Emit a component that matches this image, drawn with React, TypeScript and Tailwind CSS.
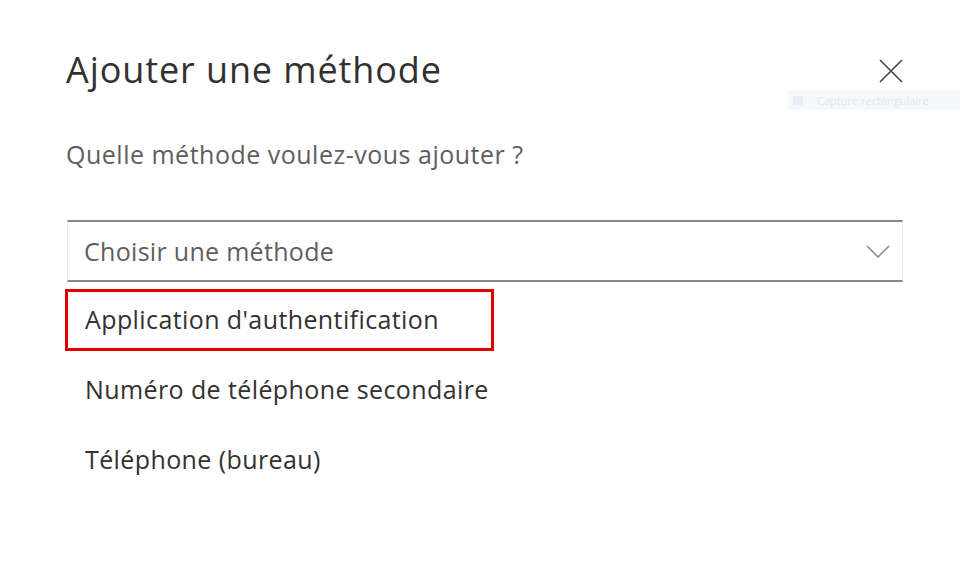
import React from "react";

const methods = [
  "Application d'authentification",
  "Numéro de téléphone secondaire",
  "Téléphone (bureau)",
];

export default function App() {
  const selected = 0;

  return (
    <div className="relative h-[583px] w-[963px] overflow-hidden bg-white font-['Open_Sans',sans-serif]">
      <div className="pl-[66px] pr-[60px] pt-[48px]">
        <div className="flex items-start justify-between">
          <h1 className="text-[36px] leading-[44px] tracking-[0.9px] text-[#323130]">Ajouter une méthode</h1>
          <button type="button" className="mt-[11px] text-[#444]" aria-label="Fermer">
            <svg width="24" height="24" viewBox="0 0 24 24" fill="none" stroke="currentColor" strokeWidth="1.6">
              <path d="M1 1L23 23M23 1L1 23" />
            </svg>
          </button>
        </div>

        <p className="mt-[45px] text-[25px] leading-[34px] tracking-[0.5px] text-[#605e5c]">Quelle méthode voulez-vous ajouter ?</p>

        <div className="mt-[49px] ml-[1px] flex h-[62px] w-[836px] items-center justify-between border-x border-y-2 border-x-[#ececec] border-y-[#8a8886] pl-[16px] pr-[12px]">
          <span className="text-[25px] leading-[34px] tracking-[0.3px] text-[#605e5c]">Choisir une méthode</span>
          <svg width="24" height="13" viewBox="0 0 24 13" fill="none" stroke="#8a8886" strokeWidth="1.5">
            <path d="M1 1L12 12L23 1" />
          </svg>
        </div>

        <ul className="-ml-[1px] mt-[7px] flex flex-col gap-[8px]">
          {methods.map((method, index) => (
            <li
              key={method}
              className={`flex h-[62px] w-[429px] items-center border-[3px] pb-[2px] pl-[17px] text-[25px] leading-[34px] tracking-[0.4px] text-[#323130] ${
                index === selected ? "border-[#e50000]" : "border-transparent"
              }`}
            >
              {method}
            </li>
          ))}
        </ul>
      </div>

      {/* faint leftover of the screen capture tooltip */}
      <div className="absolute left-[787px] top-[90px] flex h-[20px] w-[173px] items-center gap-[14px] bg-[#f5f8fc] pl-[6px]">
        <div className="h-[9px] w-[10px] bg-[#e8eef6]" />
        <span className="text-[11px] leading-none text-[#e2e8f0]">Capture rectangulaire</span>
      </div>
    </div>
  );
}
